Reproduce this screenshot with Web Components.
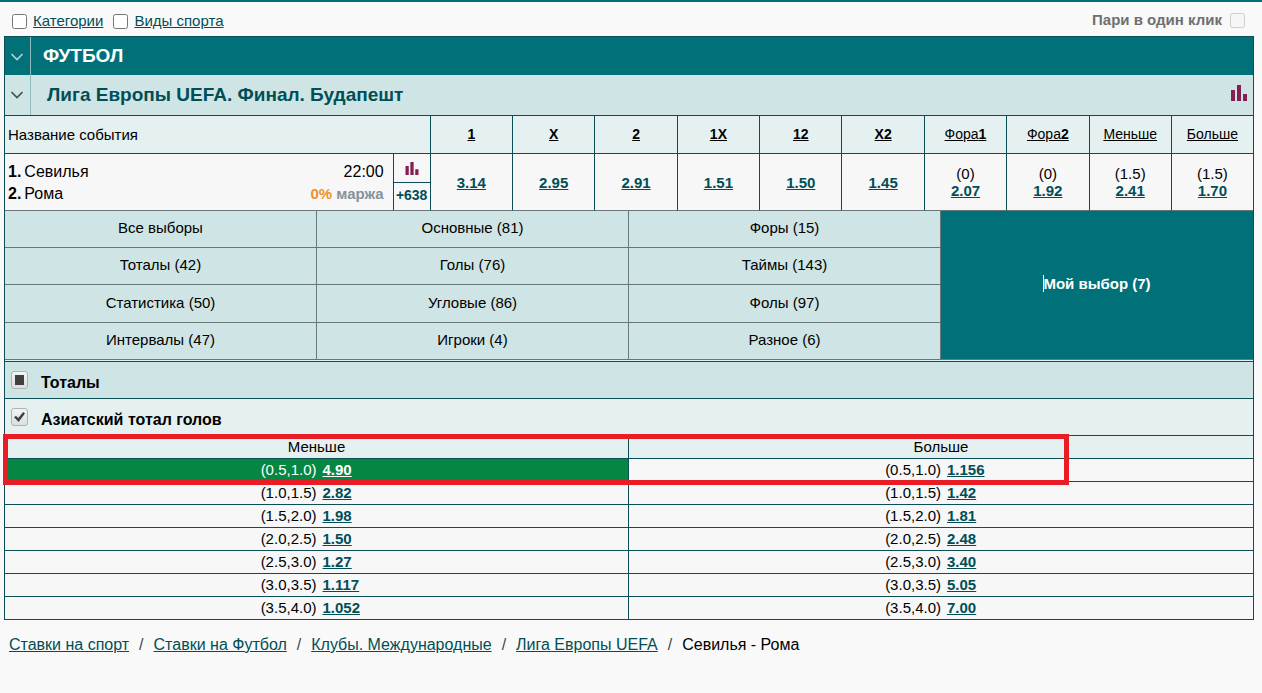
<!DOCTYPE html>
<html lang="ru">
<head>
<meta charset="utf-8">
<meta name="viewport" content="width=device-width, initial-scale=1">
<title>Севилья - Рома</title>
<style>
  :root {
    --teal: #007178;
    --line: #0b4e56;
    --grid: #68787a;
    --pale: #cfe4e4;
    --mint: #e5f1f0;
    --cell: #f7f7f7;
    --link: #004f57;
    --berry: #83204f;
    --green: #058743;
  }
  body {
    margin: 0;
    background: #f9f9f9;
    border-top: 2px solid var(--teal);
    color: #000;
    font: 15px/18px "Liberation Sans", Arial, sans-serif;
  }
</style>
</head>
<body>
<bet-page>
  <bet-toolbar></bet-toolbar>
  <bet-board>
    <section-bar kind="sport">ФУТБОЛ</section-bar>
    <section-bar kind="league" stats>Лига Европы UEFA. Финал. Будапешт</section-bar>
    <event-table></event-table>
    <market-tabs></market-tabs>
    <market-bar kind="group">Тоталы</market-bar>
    <market-bar kind="market">Азиатский тотал голов</market-bar>
    <odds-table></odds-table>
  </bet-board>
  <bread-crumbs></bread-crumbs>
</bet-page>

<script>
const define = (name, markup, setup) => {
  customElements.define(name, class extends HTMLElement {
    constructor() {
      super();
      const t = document.createElement('template');
      t.innerHTML = typeof markup === 'function' ? markup(this) : markup;
      this.attachShadow({ mode: 'open' }).append(t.content.cloneNode(true));
      if (setup) setup(this.shadowRoot, this);
    }
  });
};

define('stat-icon', `
  <style>
    :host { display: block; width: 16px; height: 16px; color: var(--berry); }
    svg { display: block; width: 100%; height: 100%; }
  </style>
  <svg viewBox="0 0 16 16" fill="currentColor" aria-hidden="true">
    <path d="M0 5h4v11H0zM6 0h4v16H6zM12 9h4v7h-4z"/>
  </svg>`);

define('bet-page', `
  <style>:host { display: block; padding: 0 8px 0 4px; }</style>
  <slot></slot>`);

define('bet-toolbar', `
  <style>
    :host { display: flex; height: 34px; align-items: center; padding: 0 9px 0 8px; box-sizing: border-box; }
    input { width: 15px; height: 15px; margin: 0; }
    .item { display: flex; align-items: center; gap: 6px; margin-right: 10px; padding-top: 4px; }
    a { color: var(--link); font-size: 15px; }
    .one { margin: 0 0 0 auto; gap: 8px; padding-top: 2px; color: #6f6f6f; font-weight: bold; }
  </style>
  <span class="item"><input type="checkbox" aria-labelledby="c"><a id="c" href="#categories">Категории</a></span>
  <span class="item"><input type="checkbox" aria-labelledby="s"><a id="s" href="#sports">Виды спорта</a></span>
  <label class="item one">Пари в один клик <input type="checkbox" disabled></label>`);

define('bet-board', `
  <style>:host { display: block; border: 1px solid var(--line); border-bottom: 0; background: var(--cell); }</style>
  <slot></slot>`);

define('section-bar', el => `
  <style>
    :host { display: flex; align-items: stretch; min-height: 38px; background: var(--teal); color: #fff; }
    :host([kind=league]) { min-height: 40px; background: var(--pale); color: var(--link); border-bottom: 1px solid var(--line); }
    button { width: 26px; padding: 2px 1px 0 0; border: 0; border-right: 1px solid #8fbdbf; background: none; color: #a9d0d2; }
    :host([kind=league]) button { padding-top: 0; color: #41585b; }
    button svg { display: block; width: 12px; height: 8px; margin: auto; }
    h2 { flex: 1; align-self: center; margin: 0 0 0 12px; font-size: 19px; line-height: 22px; }
    :host([kind=league]) h2 { margin-left: 16px; }
    stat-icon { align-self: center; margin: 0 6px 4px 0; }
  </style>
  <button type="button" aria-label="Свернуть"><svg viewBox="0 0 12 8" fill="none" stroke="currentColor" stroke-width="1.7"><path d="M0.5 1 6 6.5 11.5 1"/></svg></button>
  <h2><slot></slot></h2>
  ${el.hasAttribute('stats') ? '<stat-icon></stat-icon>' : ''}`);

const outcomes = [
  ['<b>1</b>', '', '3.14'], ['<b>X</b>', '', '2.95'], ['<b>2</b>', '', '2.91'],
  ['<b>1X</b>', '', '1.51'], ['<b>12</b>', '', '1.50'], ['<b>X2</b>', '', '1.45'],
  ['Фора<b>1</b>', '(0)', '2.07'], ['Фора<b>2</b>', '(0)', '1.92'],
  ['Меньше', '(1.5)', '2.41'], ['Больше', '(1.5)', '1.70']
];

define('event-table', `
  <style>
    :host { display: block; }
    table { width: 100%; table-layout: fixed; border-collapse: separate; border-spacing: 0; }
    .links { width: 37px; }
    .odd { width: 6.6%; }
    .odd:last-child { width: 6.5%; }
    th, td { padding: 0; border: 0 solid var(--line); border-width: 0 1px 1px 0; text-align: center; box-sizing: border-box; }
    th:last-child, td:last-child { border-right: 0; }
    th { height: 38px; padding-bottom: 2px; background: var(--mint); font-weight: normal; font-size: 14px; }
    th.title { padding: 0 0 0 3px; text-align: left; font-size: 15px; }
    td { height: 57px; background: var(--cell); border-bottom-color: var(--grid); line-height: 17px; }
    th a { color: #000; }
    td a { color: var(--link); font-weight: bold; }
    td a, td span { font-size: 15px; }
    td .pt { display: block; }
    .teams { padding: 2px 9px 0 3px; line-height: 22px; }
    .line { display: flex; justify-content: space-between; font-size: 16px; }
    .line .who, .line .time { font-size: 16px; }
    .line .who { display: flex; gap: 3px; }
    .line .margin { color: #86919b; font-weight: bold; }
    .margin i { color: #ef9128; font-style: normal; }
    .links-cell a { display: flex; height: 28px; align-items: center; justify-content: center; box-sizing: border-box; font-size: 14px; text-decoration: none; }
    .links-cell a + a { border-top: 1px solid var(--line); padding-bottom: 2px; }
    .links-cell stat-icon { width: 14px; height: 13px; }
  </style>
  <table>
    <colgroup><col><col class="links">${'<col class="odd">'.repeat(10)}</colgroup>
    <thead><tr><th class="title" colspan="2" scope="col">Название события</th>${outcomes.map(o => `<th scope="col"><a href="#sort">${o[0]}</a></th>`).join('')}</tr></thead>
    <tbody><tr>
      <td class="teams">
        <div class="line"><span class="who"><b>1.</b> Севилья</span><span class="time">22:00</span></div>
        <div class="line"><span class="who"><b>2.</b> Рома</span><span class="margin"><i>0%</i> маржа</span></div>
      </td>
      <td class="links-cell"><a href="#stats" aria-label="Статистика"><stat-icon></stat-icon></a><a href="#all">+638</a></td>
      ${outcomes.map(o => `<td>${o[1] ? `<span class="pt">${o[1]}</span>` : ''}<a href="#bet">${o[2]}</a></td>`).join('')}
    </tr></tbody>
  </table>`);

define('market-tabs', `
  <style>
    :host { display: block; background: #e3f1f1; padding-bottom: 1px; border-bottom: 1px solid var(--line); }
    nav { display: grid; grid-template-columns: repeat(4, 1fr); grid-template-rows: 37px 37px 38px 37px; }
    button { padding: 0 0 2px; border: 0 solid var(--grid); border-width: 0 1px 1px 0; background: var(--pale); color: #000; font: inherit; }
    .mine { position: relative; grid-area: 1 / 4 / 5 / 5; border-right: 0; background: var(--teal); color: #fff; font-weight: bold; }
    .mine span { position: relative; }
    .mine span::before { content: ""; position: absolute; left: 0; top: 0; width: 1px; height: 17px; background: #fff; }
  </style>
  <nav>${['Все выборы', 'Основные (81)', 'Форы (15)', 'Тоталы (42)', 'Голы (76)', 'Таймы (143)',
    'Статистика (50)', 'Угловые (86)', 'Фолы (97)', 'Интервалы (47)', 'Игроки (4)', 'Разное (6)']
    .map(t => `<button type="button">${t}</button>`).join('')}<button type="button" class="mine"><span>Мой выбор (7)</span></button></nav>`);

define('market-bar', `
  <style>
    :host { display: block; background: var(--pale); border-bottom: 1px solid var(--line); }
    :host([kind=market]) { background: var(--mint); }
    label { display: flex; min-height: 36px; align-items: center; gap: 13px; padding-left: 6px; font-size: 16px; font-weight: bold; }
    input { appearance: none; position: relative; flex: none; width: 17px; height: 18px; margin: 0; border: 1px solid #acb4b4; border-radius: 3px; background: linear-gradient(#f4f4f4, #dcdfdf); }
    input::before { content: ""; position: absolute; }
    input:indeterminate::before { left: 3px; top: 3px; width: 9px; height: 10px; background: #404040; }
    input:checked::before { left: 2px; top: 3px; width: 11px; height: 10px; background: #404040; clip-path: polygon(0 52%, 18% 38%, 38% 60%, 84% 0, 100% 14%, 42% 100%); }
    span { padding-top: 6px; }
  </style>
  <label><input type="checkbox"><span><slot></slot></span></label>`,
  (root, el) => {
    const box = root.querySelector('input');
    if (el.getAttribute('kind') === 'group') box.indeterminate = true;
    else box.checked = true;
  });

const totals = [
  ['(0.5,1.0)', '4.90', '1.156'], ['(1.0,1.5)', '2.82', '1.42'], ['(1.5,2.0)', '1.98', '1.81'],
  ['(2.0,2.5)', '1.50', '2.48'], ['(2.5,3.0)', '1.27', '3.40'], ['(3.0,3.5)', '1.117', '5.05'],
  ['(3.5,4.0)', '1.052', '7.00']
];

define('odds-table', `
  <style>
    :host { display: block; position: relative; }
    table { width: 100%; table-layout: fixed; border-collapse: separate; border-spacing: 0; }
    th, td { height: 23px; padding: 0; box-sizing: border-box; border: 0 solid var(--line); border-width: 0 1px 1px 0; text-align: center; }
    th:last-child, td:last-child { border-right: 0; }
    th { background: var(--mint); font-weight: normal; }
    td { background: var(--cell); }
    .pair { display: grid; grid-template-columns: 1fr 1fr; gap: 6px; padding-left: 6px; text-align: left; }
    .pair span { text-align: right; }
    a { color: var(--link); font-weight: bold; }
    .picked { background: var(--green); color: #fff; }
    .picked a { color: #fff; }
    .frame { position: absolute; left: -2px; top: -2px; right: 184px; height: 51px; box-sizing: border-box; border: 5px solid #e81d25; pointer-events: none; }
  </style>
  <table>
    <thead><tr><th scope="col">Меньше</th><th scope="col">Больше</th></tr></thead>
    <tbody>${totals.map((r, i) => `<tr>${[1, 2].map(c => `<td${i === 0 && c === 1 ? ' class="picked"' : ''}><div class="pair"><span>${r[0]}</span><a href="#bet">${r[c]}</a></div></td>`).join('')}</tr>`).join('')}</tbody>
  </table>
  <div class="frame"></div>`);

define('bread-crumbs', `
  <style>
    :host { display: block; padding: 15px 5px; font-size: 16px; line-height: 20px; }
    nav { display: flex; flex-wrap: wrap; gap: 10px; }
    a { color: var(--link); }
    i { color: #444; font-style: normal; }
  </style>
  <nav><a href="#betting">Ставки на спорт</a><i>/</i><a href="#football">Ставки на Футбол</a><i>/</i><a href="#clubs">Клубы. Международные</a><i>/</i><a href="#league">Лига Европы UEFA</a><i>/</i><span>Севилья - Рома</span></nav>`);
</script>
</body>
</html>
